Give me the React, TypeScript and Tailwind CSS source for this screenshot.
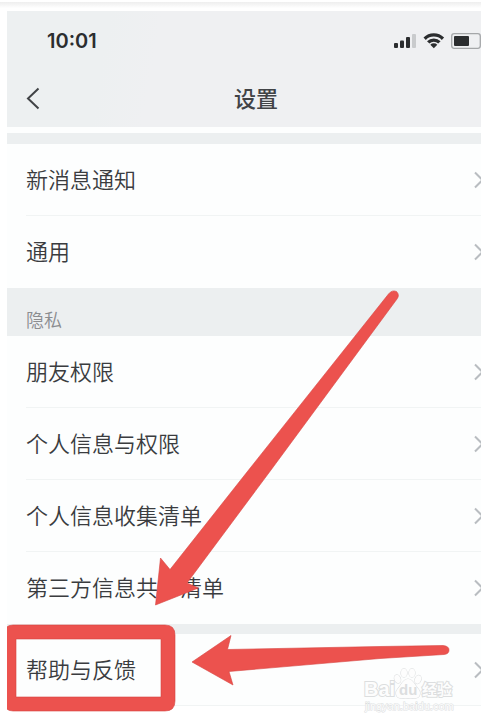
import React from 'react';

interface SettingsRowProps {
  label: string;
  last?: boolean;
}

const ChevronRight = () => (
  <svg className="h-5 w-3 shrink-0" viewBox="0 0 12 20" fill="none" aria-hidden="true">
    <path d="M2 2.5 9.5 10 2 17.5" stroke="#b9bdc1" strokeWidth="2" />
  </svg>
);

const SettingsRow: React.FC<SettingsRowProps> = ({ label, last = false }) => (
  <li className="pl-[19px]">
    <button
      type="button"
      className={`flex h-[72px] w-full items-center justify-between border-b pr-[20px] text-left text-[22px] leading-8 font-[350] text-[#3a3c3f] ${
        last ? 'border-transparent' : 'border-[#f1f4f4]'
      }`}
    >
      <span className="pb-1">{label}</span>
      <ChevronRight />
    </button>
  </li>
);

const StatusBar = () => (
  <div className="flex h-[60px] items-center justify-between pl-10 pr-6">
    <time className="font-[Inter,sans-serif] text-[20px] font-semibold leading-6 text-[#2b2d2f]">10:01</time>
    <svg className="h-5 w-[88px]" viewBox="0 0 88 20" aria-label="Signal, Wi-Fi and battery">
      <g fill="#2b2d2f">
        <rect x="1" y="12" width="4" height="5" rx="1" />
        <rect x="7" y="9.500" width="4" height="7.500" rx="1" />
        <rect x="13" y="6" width="4" height="11" rx="1" />
        <rect x="19" y="3" width="4" height="14" rx="1" fill="#c9cbcd" />
        <path d="M30.500 6.500a14.500 14.500 0 0 1 20.600 0l-2.300 2.400a11.300 11.300 0 0 0-16 0Z" />
        <path d="M34 10.200a9.600 9.600 0 0 1 13.600 0l-2.400 2.400a6.400 6.400 0 0 0-8.800 0Z" />
        <path d="M37.300 13.800a4.900 4.900 0 0 1 7 0L40.800 17.300Z" />
        <rect x="61" y="5" width="15" height="10" rx="1" />
      </g>
      <rect x="58.700" y="2.700" width="28.600" height="14.600" rx="2.500" fill="none" stroke="#a5a7a9" strokeWidth="1.300" />
    </svg>
  </div>
);

const Header = () => (
  <header className="bg-[linear-gradient(100deg,#edf0f1_0%,#edf0f1_20%,#eff0f2_30%)]">
    <StatusBar />
    <div className="grid h-14 grid-cols-[1fr_auto_1fr] items-start px-4">
      <button type="button" aria-label="返回" className="mt-4 flex h-6 w-6 items-center">
        <svg className="h-6 w-5" viewBox="0 0 20 24" fill="none" aria-hidden="true">
          <path d="M15.5 1.5 5 11.5l10.5 10" stroke="#414346" strokeWidth="2" />
        </svg>
      </button>
      <h1 className="mt-[10px] text-[22px] font-medium leading-8 text-[#414346]">设置</h1>
    </div>
  </header>
);

// Highlight box and the two arrows that point at the help entry
const Annotations = () => (
  <svg
    className="pointer-events-none absolute left-0 top-0 h-[723px] w-[481px]"
    viewBox="0 0 481 723"
    aria-hidden="true"
  >
    <defs>
      <clipPath id="screen-edge">
        <rect x="7" y="0" width="474" height="723" />
      </clipPath>
    </defs>
    <g fill="#ec524e" stroke="#d64541" strokeWidth="0.6" strokeLinejoin="round">
      <path
        clipPath="url(#screen-edge)"
        fillRule="evenodd"
        d="M13 625H165Q175 625 175 635V701Q175 711 165 711H13Q4 711 4 701V635Q4 625 13 625ZM16 639V697H161V639Z"
      />
      <path d="M155.500 605 160.500 558 170 569.500 249 469.500 388.500 294Q392 289.500 396.500 291.500 400 295 397 299L271 470 187 583 198.500 588Z" />
      <path d="M192 662 231 635.500 227.500 649.500 380 646.500 443 645.500Q449 646 449 650 449 654 444 654.500L380 658.500 229 671.500 233 685Z" />
    </g>
  </svg>
);

const Watermark = () => (
  <svg
    className="pointer-events-none absolute left-[360px] top-[664px] h-[52px] w-[100px]"
    viewBox="0 0 100 52"
    aria-label="Baidu 经验"
  >
    <g fill="#fdfdfd" stroke="#dcdedf" strokeWidth="1.2" paintOrder="stroke">
      <text x="4" y="32" fontFamily="Liberation Sans, sans-serif" fontSize="20" fontWeight="700" strokeWidth="2">
        Bai
      </text>
      <ellipse cx="37.500" cy="15" rx="3" ry="4.200" transform="rotate(-20 37.500 15)" />
      <ellipse cx="44" cy="9" rx="3" ry="4.200" />
      <ellipse cx="52" cy="9" rx="3" ry="4.200" />
      <ellipse cx="58" cy="15.500" rx="3" ry="4.200" transform="rotate(20 58 15.500)" />
      <path d="M48 15c4 0 6 4 8 7s4 4 4 7c0 5-4 6-12 5-8 1-12 0-12-5 0-3 2-4 4-7s4-7 8-7Z" />
      <text x="39" y="31" fontFamily="Liberation Sans, sans-serif" fontSize="15" fontWeight="700" fill="#dcdedf" stroke="none">
        du
      </text>
      <text x="62" y="31" fontFamily="Noto Sans CJK SC, sans-serif" fontSize="15" fontWeight="700" strokeWidth="2">
        经验
      </text>
      <text x="5" y="46" fontFamily="Liberation Sans, sans-serif" fontSize="11" strokeWidth="1">
        jingyan.baidu.com
      </text>
    </g>
  </svg>
);

export default function App() {
  return (
    <div className="relative min-h-screen overflow-hidden bg-white font-['Noto_Sans_CJK_SC',sans-serif]">
      <div className="mt-[2px] h-[9px] bg-linear-to-b from-[#eeeeee] to-white to-70%" />
      {/* the phone screen runs past the right edge of the window */}
      <main className="-mr-6 ml-[7px] bg-[#fdfefe]">
        <Header />
        <div className="mt-[6px] h-[11px] bg-[#eceff0]" />
        <ul>
          <SettingsRow label="新消息通知" />
          <SettingsRow label="通用" last />
        </ul>
        <h2 className="h-12 bg-[#eceff0] pl-[19px] pt-[17px] text-[18px] font-[350] leading-7 text-[#8b8d90]">隐私</h2>
        <ul>
          <SettingsRow label="朋友权限" />
          <SettingsRow label="个人信息与权限" />
          <SettingsRow label="个人信息收集清单" />
          <SettingsRow label="第三方信息共享清单" last />
        </ul>
        <div className="h-[10px] bg-[#eceff0]" />
        <ul>
          <SettingsRow label="帮助与反馈" />
        </ul>
      </main>
      <Annotations />
      <Watermark />
    </div>
  );
}
